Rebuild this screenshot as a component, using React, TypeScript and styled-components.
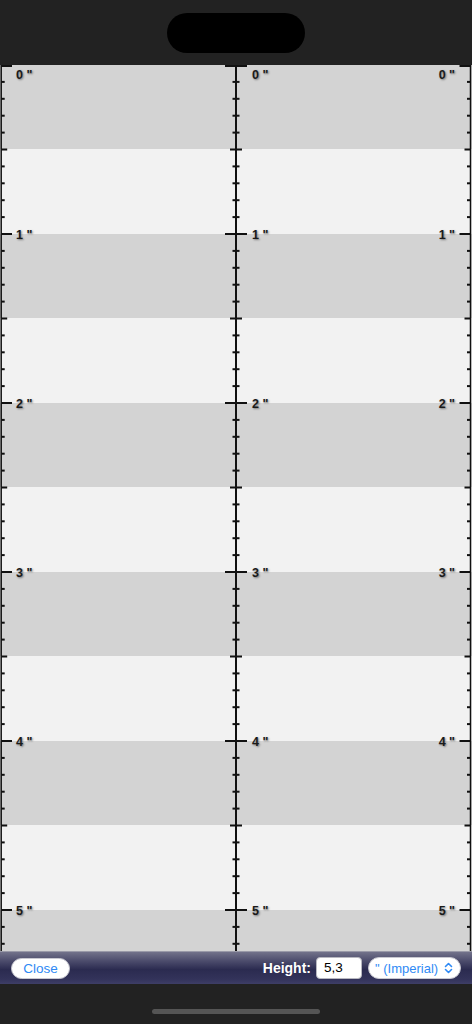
import styled, { createGlobalStyle } from 'styled-components';

const INCH = 169;
const TENTH = INCH / 10;
const RULER_HEIGHT = 886;
const TICK_COUNT = Math.floor(RULER_HEIGHT / TENTH);
const INCHES = [0, 1, 2, 3, 4, 5];

const GlobalStyle = createGlobalStyle`
    html, body {
        margin: 0;
        padding: 0;
        background: #222222;
        font-family: "Liberation Sans", Arial, sans-serif;
    }
`;

const Screen = styled.div`
    width: 472px;
    height: 1024px;
    display: flex;
    flex-direction: column;
    background: #222222;
    overflow: hidden;
`;

const StatusBar = styled.div`
    height: 65px;
    display: flex;
    justify-content: center;
    padding-top: 13px;
    box-sizing: border-box;
`;

const Island = styled.div`
    width: 138px;
    height: 40px;
    border-radius: 20px;
    background: #000;
`;

const RulerArea = styled.div`
    height: ${RULER_HEIGHT}px;
    display: flex;
    background: repeating-linear-gradient(
        to bottom,
        #d3d3d3 0px,
        #d3d3d3 ${INCH / 2}px,
        #f2f2f2 ${INCH / 2}px,
        #f2f2f2 ${INCH}px
    );
`;

const TickStrip = styled.svg<{ $w: number }>`
    width: ${(p) => p.$w}px;
    height: ${RULER_HEIGHT}px;
    flex: none;
    display: block;
`;

const LabelColumn = styled.div<{ $w: number }>`
    position: relative;
    width: ${(p) => p.$w}px;
    flex: none;
`;

const Label = styled.span<{ $side: 'left' | 'right' }>`
    position: absolute;
    ${(p) => (p.$side === 'left' ? 'left: 4px;' : 'right: 1px;')}
    font-size: 12.5px;
    line-height: 12px;
    font-weight: 700;
    color: #1a1a1a;
    white-space: pre;
    text-shadow: 1px 1px 2px rgba(0, 0, 0, 0.45);
`;

const Toolbar = styled.div`
    height: 33px;
    display: flex;
    align-items: center;
    padding: 0 11px;
    box-sizing: border-box;
    border-top: 1px solid #9a9aa8;
    background: linear-gradient(
        to bottom,
        #72728a 0%,
        #4c4c6c 28%,
        #2b2b50 55%,
        #33335a 85%,
        #3e3e66 100%
    );
`;

const PillButton = styled.button`
    height: 21px;
    width: 59px;
    padding: 0;
    border-radius: 11px;
    border: 1px solid #c8c8d0;
    background: #fff;
    color: #2f8af5;
    font-family: inherit;
    font-size: 13.5px;
    line-height: 19px;
`;

const Spacer = styled.div`
    flex: 1;
`;

const FieldLabel = styled.span`
    color: #fff;
    font-size: 14px;
    font-weight: 700;
    margin-right: 5px;
`;

const NumberField = styled.div`
    width: 46px;
    height: 22px;
    box-sizing: border-box;
    border-radius: 4px;
    border: 1px solid #b8b8c0;
    background: #fff;
    color: #000;
    font-size: 13.5px;
    line-height: 20px;
    padding-left: 7px;
    margin-right: 6px;
`;

const UnitSelect = styled.div`
    width: 93px;
    height: 22px;
    box-sizing: border-box;
    border-radius: 11px;
    border: 1px solid #c8c8d0;
    background: #fff;
    display: flex;
    align-items: center;
    justify-content: space-between;
    padding: 0 7px 0 6px;
    color: #2f8af5;
    font-size: 13px;
`;

const HomeArea = styled.div`
    flex: 1;
    display: flex;
    align-items: flex-end;
    justify-content: center;
    padding-bottom: 10px;
`;

const HomeIndicator = styled.div`
    width: 168px;
    height: 5px;
    border-radius: 3px;
    background: #555;
`;

const tickLength = (i: number) => (i % 10 === 0 ? 11 : i % 5 === 0 ? 6 : 3.5);

type RulerProps = { width: number; lineX: number; mode: 'left' | 'center' | 'right' };

const Ruler = ({ width, lineX, mode }: RulerProps) => {
    const ticks = Array.from({ length: TICK_COUNT + 1 }, (_, i) => i);
    return (
        <TickStrip $w={width} viewBox={`0 0 ${width} ${RULER_HEIGHT}`}>
            <line x1={lineX} y1={0} x2={lineX} y2={RULER_HEIGHT} stroke="#111" strokeWidth={mode === 'center' ? 2 : 1.5} />
            {ticks.map((i) => {
                const y = Math.max(i * TENTH, 1);
                const len = tickLength(i);
                const x1 = mode === 'left' ? lineX : lineX - len;
                const x2 = mode === 'right' ? lineX : lineX + len;
                return <line key={i} x1={x1} y1={y} x2={x2} y2={y} stroke="#111" strokeWidth={2} />;
            })}
        </TickStrip>
    );
};

const labelTop = (i: number) => (i === 0 ? 4 : i * INCH - 5);

const Labels = ({ width, sides }: { width: number; sides: ('left' | 'right')[] }) => (
    <LabelColumn $w={width}>
        {sides.map((side) =>
            INCHES.map((i) => (
                <Label key={side + i} $side={side} style={{ top: labelTop(i) }}>
                    {`${i} "`}
                </Label>
            ))
        )}
    </LabelColumn>
);

const Chevrons = () => (
    <svg width="9" height="12" viewBox="0 0 9 12" fill="none" stroke="#2f8af5" strokeWidth="1.6" strokeLinecap="round" strokeLinejoin="round">
        <path d="M1.5 4.5 L4.5 1.5 L7.5 4.5" />
        <path d="M1.5 7.5 L4.5 10.5 L7.5 7.5" />
    </svg>
);

export default function App() {
    return (
        <>
            <GlobalStyle />
            <Screen>
                <StatusBar>
                    <Island />
                </StatusBar>
                <RulerArea>
                    <Ruler width={12} lineX={1.2} mode="left" />
                    <Labels width={212} sides={['left']} />
                    <Ruler width={24} lineX={12} mode="center" />
                    <Labels width={208} sides={['left', 'right']} />
                    <Ruler width={16} lineX={14.5} mode="right" />
                </RulerArea>
                <Toolbar>
                    <PillButton>Close</PillButton>
                    <Spacer />
                    <FieldLabel>Height:</FieldLabel>
                    <NumberField>5,3</NumberField>
                    <UnitSelect>
                        <span>" (Imperial)</span>
                        <Chevrons />
                    </UnitSelect>
                </Toolbar>
                <HomeArea>
                    <HomeIndicator />
                </HomeArea>
            </Screen>
        </>
    );
}
